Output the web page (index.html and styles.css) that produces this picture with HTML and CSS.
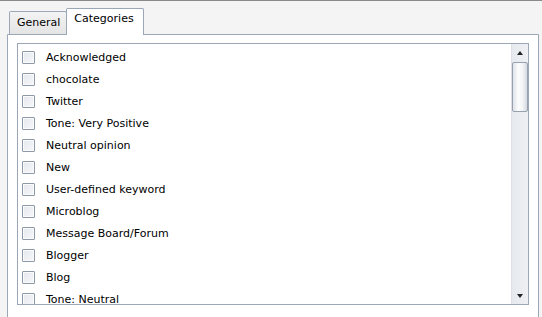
FILE: index.html
```html
<!DOCTYPE html>
<html lang="en">
<head>
  <meta charset="UTF-8" />
  <title>Categories</title>
  <link rel="stylesheet" href="styles.css">
</head>
<body>
  <div class="dialog">
    <div class="tab-strip">
      <div class="tab">General</div>
      <div class="tab selected">Categories</div>
    </div>
    <div class="tab-panel">
      <div class="list-box">
        <ul class="items">
          <li><span class="check"></span>Acknowledged</li>
          <li><span class="check"></span>chocolate</li>
          <li><span class="check"></span>Twitter</li>
          <li><span class="check"></span>Tone: Very Positive</li>
          <li><span class="check"></span>Neutral opinion</li>
          <li><span class="check"></span>New</li>
          <li><span class="check"></span>User-defined keyword</li>
          <li><span class="check"></span>Microblog</li>
          <li><span class="check"></span>Message Board/Forum</li>
          <li><span class="check"></span>Blogger</li>
          <li><span class="check"></span>Blog</li>
          <li><span class="check"></span>Tone: Neutral</li>
        </ul>
        <div class="scrollbar">
          <div class="arrow up"></div>
          <div class="track">
            <div class="thumb"></div>
          </div>
          <div class="arrow down"></div>
        </div>
      </div>
    </div>
  </div>
</body>
</html>
```

FILE: styles.css
```css
html, body {
  margin: 0;
  padding: 0;
}

body {
  font-family: 'DejaVu Sans', Verdana, sans-serif;
  font-size: 11px;
  color: #000;
  background-color: #f4f4f4;
  border-top: 1px solid #8a8a8a;
  height: 316px;
  overflow: hidden;
}

.dialog {
  margin-left: 7px;
  width: 532px;
}

.tab-strip {
  display: flex;
  align-items: flex-end;
  padding-left: 2px;
  height: 33px;
  position: relative;
  z-index: 1;
}

.tab {
  height: 22px;
  line-height: 22px;
  padding: 0 6px 0 7px;
  border: 1px solid #9ba7b7;
  border-bottom: none;
  border-radius: 2px 2px 0 0;
  background: linear-gradient(#f3f3f3, #e4e4e4);
  font-size: 11px;
}

.tab.selected {
  height: 26px;
  line-height: 20px;
  padding: 0 9px 0 7px;
  margin-left: -1px;
  margin-bottom: -1px;
  background: #fff;
  font-size: 11px;
}

.tab-panel {
  height: 271px;
  padding: 8px 9px 8px 9px;
  background-color: #fff;
  border: 1px solid #9ba7b7;
  border-radius: 0 0 3px 3px;
}

.list-box {
  display: flex;
  height: 260px;
  border: 1px solid #9ba7b7;
  overflow: hidden;
}

.items {
  flex: 1;
  list-style: none;
  margin: 0;
  padding: 2px 0 0 0;
}

.items li {
  display: flex;
  align-items: center;
  height: 22px;
  padding-left: 4px;
}

.check {
  width: 11px;
  height: 11px;
  margin-right: 11px;
  border: 1px solid #8e99a8;
  border-radius: 1px;
  background: linear-gradient(135deg, #e4e8ee, #f6f7f9);
  box-shadow: inset 0 0 0 1px #fbfbfc;
}

.scrollbar {
  width: 16px;
  display: flex;
  flex-direction: column;
  background: linear-gradient(90deg, #e6e9ee, #eef0f3);
  border-left: 1px solid #dde1e6;
}

.arrow {
  height: 17px;
  display: flex;
  align-items: center;
  justify-content: center;
}

.arrow::before {
  content: "";
  border-left: 3px solid transparent;
  border-right: 3px solid transparent;
}

.arrow.up::before {
  border-bottom: 4px solid #222;
}

.arrow.down::before {
  border-top: 4px solid #222;
}

.track {
  flex: 1;
}

.thumb {
  height: 48px;
  margin: 1px 0 0 0;
  border: 1px solid #98a2af;
  border-radius: 2px;
  background: linear-gradient(90deg, #dfe3e8, #fdfdfe 40%, #f1f3f5 70%, #d4d9e0);
}
```
